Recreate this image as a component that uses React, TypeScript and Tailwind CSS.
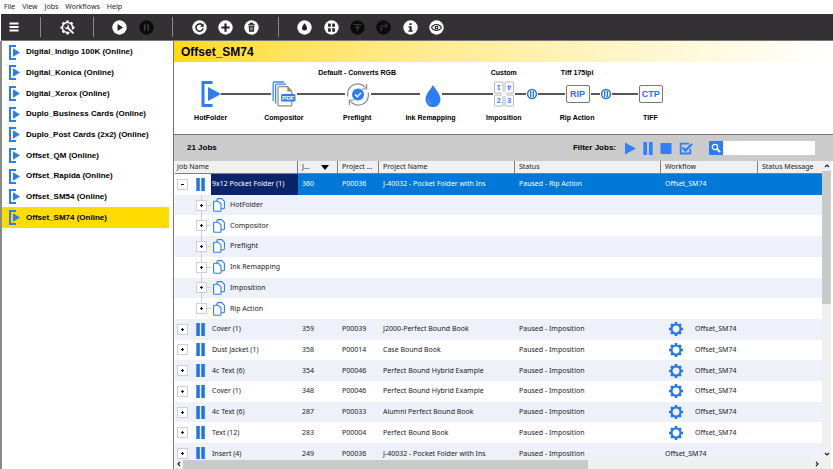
import type { ReactNode } from 'react';

const UI = "font-['Noto_Sans','Open_Sans',sans-serif]";
const BOLD = "font-['Liberation_Sans',Arial,sans-serif] font-bold";

const menus = ['File', 'View', 'Jobs', 'Workflows', 'Help'];

const workflows = [
  'Digital_Indigo 100K (Online)',
  'Digital_Konica (Online)',
  'Digital_Xerox (Online)',
  'Duplo_Business Cards (Online)',
  'Duplo_Post Cards (2x2) (Online)',
  'Offset_QM (Online)',
  'Offset_Rapida (Online)',
  'Offset_SM54 (Online)',
  'Offset_SM74 (Online)',
];

const stages = ['HotFolder', 'Compositor', 'Preflight', 'Ink Remapping', 'Imposition', 'Rip Action'];

const jobs = [
  { name: 'Cover (1)', id: '359', project: 'P00039', title: 'J2000-Perfect Bound Book', gear: true },
  { name: 'Dust Jacket (1)', id: '358', project: 'P00014', title: 'Case Bound Book', gear: true },
  { name: '4c Text (6)', id: '354', project: 'P00046', title: 'Perfect Bound Hybrid Example', gear: true },
  { name: 'Cover (1)', id: '348', project: 'P00046', title: 'Perfect Bound Hybrid Example', gear: true },
  { name: '4c Text (6)', id: '287', project: 'P00033', title: 'Alumni Perfect Bound Book', gear: true },
  { name: 'Text (12)', id: '283', project: 'P00004', title: 'Perfect Bound Book', gear: true },
  { name: 'Insert (4)', id: '249', project: 'P00036', title: 'J-40032 - Pocket Folder with Ins', gear: false },
];

const teeth = [0, 45, 90, 135, 180, 225, 270, 315];

function HotFolderIcon() {
  return (
    <svg viewBox="0 0 20 26" className="h-[26px] w-5" aria-hidden="true">
      <path d="M11.500 1.500H2v23h9.500" fill="none" stroke="#2b7df5" strokeWidth="3" />
      <path d="M7 6 20 13 7 20z" fill="#2b7df5" />
    </svg>
  );
}

function FolderIcon() {
  return (
    <svg viewBox="0 0 11 15" className="h-[15px] w-[11px]" aria-hidden="true">
      <path d="M7 1H1v13h6" fill="none" stroke="#2b7df5" strokeWidth="2" />
      <path d="M4 3.200 11 7.500 4 11.800z" fill="#2b7df5" />
    </svg>
  );
}

function PauseBars() {
  return (
    <svg viewBox="0 0 9 13" className="ml-2 h-[13px] w-[9px]" aria-hidden="true">
      <path d="M.3 0h3.500v13H.3zM5.300 0h3.500v13H5.300z" fill="#1f74e8" />
    </svg>
  );
}

function GearIcon() {
  return (
    <svg viewBox="0 0 14 14" className="size-3.5 shrink-0" aria-hidden="true">
      <circle cx="7" cy="7" r="4.500" fill="none" stroke="#2277ec" strokeWidth="2.100" />
      {teeth.map((a) => (
        <path key={a} d="M5.700 0h2.600v2.400H5.700z" fill="#2277ec" transform={`rotate(${a} 7 7)`} />
      ))}
    </svg>
  );
}

function CopyIcon() {
  return (
    <svg viewBox="0 0 12 14" className="h-3.5 w-3 shrink-0" fill="#fff" stroke="#2b7df5" strokeWidth="1.100" aria-hidden="true">
      <path d="M4 1.600a1 1 0 0 1 1-1h3.600l2.800 2.800v6.400a1 1 0 0 1-1 1H4z" />
      <path d="M.6 4.200a1 1 0 0 1 1-1h3.600L8 6v6.300a1 1 0 0 1-1 1H1.600a1 1 0 0 1-1-1z" />
    </svg>
  );
}

function Expander({ label, open = false }: { label: string; open?: boolean }) {
  return (
    <button
      type="button"
      aria-label={label}
      aria-expanded={open}
      className="relative flex size-[11px] shrink-0 items-center justify-center border border-[#cfcfd3] bg-white"
    >
      <svg viewBox="0 0 3 3" className="size-[3px]" aria-hidden="true">
        <path d={open ? 'M0 1h3v1H0z' : 'M1 0h1v1h1v1H2v1H1V2H0V1h1z'} fill="#111" />
      </svg>
    </button>
  );
}

function Disc({ dark = false, children }: { dark?: boolean; children: ReactNode }) {
  return (
    <svg viewBox="0 0 16 16" className="size-[15px]" aria-hidden="true">
      <circle cx="8" cy="8" r="7.700" fill={dark ? '#0b0b0b' : '#fff'} />
      {children}
    </svg>
  );
}

const divider = null;
const tools: ({ label: string; icon: ReactNode } | null)[] = [
  {
    label: 'Menu',
    icon: (
      <svg viewBox="0 0 10 10" className="size-2.5" aria-hidden="true">
        <path d="M.5 1.500h9M.5 5h9M.5 8.500h9" stroke="#fff" strokeWidth="2" />
      </svg>
    ),
  },
  divider,
  {
    label: 'Workflow settings',
    icon: (
      <svg viewBox="0 0 16 16" className="size-[15px]" aria-hidden="true">
        <circle cx="8" cy="8" r="5.400" fill="none" stroke="#fff" strokeWidth="1.500" />
        {teeth.map((a) => (
          <path key={a} d="M6.800.6h2.400l.4 2.200H6.400z" fill="#fff" transform={`rotate(${a} 8 8)`} />
        ))}
        <path d="m8.200 8.200 5.600 5.600" stroke="#333133" strokeWidth="4" />
        <path d="m8 8 5.800 5.800" stroke="#fff" strokeWidth="2" strokeLinecap="round" />
        <path d="M7 4.800 8.600 6.400 8 8l-1.600.6L4.800 7a2.600 2.600 0 0 0 4.400 2 2.600 2.600 0 0 0-2.200-4.200z" fill="#fff" />
      </svg>
    ),
  },
  divider,
  { label: 'Start', icon: <Disc><path d="M5.900 4.200 11.800 8l-5.900 3.800z" fill="#222" /></Disc> },
  { label: 'Pause', icon: <Disc dark><path d="M5.200 4.600h1.900v6.800H5.200zM8.900 4.600h1.900v6.800H8.900z" fill="#3c3c3c" /></Disc> },
  divider,
  {
    label: 'Refresh',
    icon: (
      <Disc>
        <path d="M11 5.400A3.900 3.900 0 1 0 11.900 9" fill="none" stroke="#222" strokeWidth="1.600" />
        <path d="M12.400 3.400v3.900H8.500z" fill="#222" />
      </Disc>
    ),
  },
  { label: 'Add', icon: <Disc><path d="M8 3.600v8.800M3.600 8h8.800" stroke="#222" strokeWidth="2.300" /></Disc> },
  {
    label: 'Delete',
    icon: (
      <Disc>
        <path d="M4.400 5h7.200M6.600 4.800V3.600h2.800v1.200" fill="none" stroke="#222" strokeWidth="1.100" />
        <path d="M5 6.200h6l-.4 6.200H5.400z" fill="#222" />
        <path d="M6.700 7.200v4M8 7.200v4M9.300 7.200v4" stroke="#ddd" strokeWidth=".6" />
      </Disc>
    ),
  },
  divider,
  { label: 'Ink', icon: <Disc><path d="M8 3.400c1.400 2 2.700 3.400 2.700 5.200a2.700 2.700 0 0 1-5.400 0C5.300 6.800 6.600 5.400 8 3.400z" fill="#222" /></Disc> },
  {
    label: 'Imposition',
    icon: (
      <Disc>
        <path d="M4.400 3.600h2.300l.5.600v3H4.400zM8.800 3.600h2.300l.5.600v3H8.800zM4.400 8.800h2.300l.5.600v3H4.400zM8.800 8.800h2.300l.5.600v3H8.800z" fill="#222" />
      </Disc>
    ),
  },
  {
    label: 'Send to top',
    icon: <Disc dark><path d="M3.600 4.800h8.800M8 12V6.800M5.600 8.800 8 6.400l2.400 2.400" fill="none" stroke="#363636" strokeWidth="1.300" /></Disc>,
  },
  {
    label: 'Reroute',
    icon: <Disc dark><path d="M5.400 12.200V6.200h6M9.600 3.800 12 6.200 9.600 8.600M5.400 9.400h2" fill="none" stroke="#363636" strokeWidth="1.300" /></Disc>,
  },
  {
    label: 'Information',
    icon: (
      <Disc>
        <path d="M6.900 3.400h2.300v2H6.900zM5.900 6.600h3.300v4.600h1.200v1.400H5.800v-1.400H7V8H5.900z" fill="#222" />
      </Disc>
    ),
  },
  {
    label: 'Preview',
    icon: (
      <Disc>
        <path d="M2.600 8C4.200 5.600 6 4.800 8 4.800s3.800.8 5.400 3.200c-1.600 2.400-3.400 3.200-5.400 3.200S4.200 10.400 2.600 8z" fill="none" stroke="#222" strokeWidth="1.100" />
        <circle cx="8" cy="8" r="2" fill="#222" />
        <circle cx="8" cy="8" r=".7" fill="#fff" />
      </Disc>
    ),
  },
];

const pdfIcon = (
  <svg viewBox="0 0 24 26" className="h-[26px] w-6" aria-hidden="true">
    <path d="M1.200 20V2.200A1.200 1.200 0 0 1 2.400 1H12M3.600 22.500V4.400a1.200 1.200 0 0 1 1.200-1.200H14" fill="none" stroke="#3b88f5" strokeWidth="1.300" />
    <path d="M6 23.800V6.600c0-.6.400-1 1-1h8.600l4.200 4.600v13.600c0 .6-.4 1-1 1H7c-.6 0-1-.4-1-1z" fill="#fff" stroke="#8c8c8c" strokeWidth="1.200" />
    <path d="M15.400 5.600v4.800h4.600z" fill="#8c8c8c" />
    <rect x="9" y="13" width="14.500" height="7.500" rx="1.500" fill="#2b7df5" />
    <text x="16.200" y="19" textAnchor="middle" fontSize="6.200" fontWeight="bold" fill="#fff" fontFamily="Liberation Sans, Arial, sans-serif">PDF</text>
  </svg>
);

const preflightIcon = (
  <svg viewBox="0 0 24 26" className="h-[26px] w-6" aria-hidden="true">
    <path d="M1.800 15.500A10.200 10.200 0 0 1 19.600 6.600M22.200 11.500A10.200 10.200 0 0 1 4.400 20.400" fill="none" stroke="#8c8c8c" strokeWidth="1.200" />
    <path d="M20.600 3v5h-5M3.400 24v-5h5" fill="none" stroke="#8c8c8c" strokeWidth="1.200" />
    <circle cx="12" cy="13.500" r="6" fill="#2b7df5" />
    <path d="m9 13.500 2.300 2.200 3.800-4" fill="none" stroke="#fff" strokeWidth="1.500" />
  </svg>
);

const inkIcon = (
  <svg viewBox="0 0 20 26" className="h-[26px] w-5" aria-hidden="true">
    <path d="M12 4c2.600 5 7.500 9 7.500 14.600a7.500 7.500 0 0 1-15 0C4.500 13 9.400 9 12 4z" fill="#2b7df5" />
    <path d="M7 18a5 5 0 0 0 3.500 5" fill="none" stroke="#7fb0fa" strokeWidth=".8" />
  </svg>
);

const impositionIcon = (
  <svg viewBox="0 0 20 26" className="h-[26px] w-5" aria-hidden="true">
    {[
      { n: '1', x: 0.5, y: 1, r: 180 },
      { n: '4', x: 11, y: 1, r: 180 },
      { n: '2', x: 0.5, y: 14, r: 0 },
      { n: '3', x: 11, y: 14, r: 0 },
    ].map((p) => (
      <g key={p.n}>
        <rect x={p.x} y={p.y} width="8.500" height="11" rx="1" fill="#fff" stroke="#b5b5ba" strokeWidth="1" />
        <text x={p.x + 4.2} y={p.y + 8.2} textAnchor="middle" fontSize="7" fontWeight="bold" fill="#2b7df5" fontFamily="Liberation Sans, Arial, sans-serif" transform={`rotate(${p.r} ${p.x + 4.2} ${p.y + 5.6})`}>{p.n}</text>
      </g>
    ))}
    <path d="m7.500 10.500 5 5M12.500 10.500l-5 5" stroke="#fff" strokeWidth="1.500" />
  </svg>
);

function Plate({ children }: { children: string }) {
  return (
    <span className="flex h-[18px] w-6 items-center justify-center rounded-[2px] border border-[#77777c] bg-white text-[9px] leading-3 text-[#1f74e8]">
      {children}
    </span>
  );
}

const steps: { label: string; caption?: string; icon: ReactNode; pause?: boolean }[] = [
  { label: 'HotFolder', icon: <HotFolderIcon /> },
  { label: 'Compositor', icon: pdfIcon },
  { label: 'Preflight', caption: 'Default - Converts RGB', icon: preflightIcon },
  { label: 'Ink Remapping', icon: inkIcon },
  { label: 'Imposition', caption: 'Custom', icon: impositionIcon, pause: true },
  { label: 'Rip Action', caption: 'Tiff 175lpi', icon: <Plate>RIP</Plate>, pause: true },
  { label: 'TIFF', icon: <Plate>CTP</Plate> },
];

function Pipeline() {
  return (
    <ol className={`grid w-[513px] grid-cols-7 pt-1.5 text-[7px] leading-[10px] text-black ${BOLD}`}>
      {steps.map((s, i) => (
        <li key={s.label} className="flex flex-col items-center">
          <span className="h-[10px] whitespace-nowrap">{s.caption}</span>
          <div className="mt-[3px] flex h-[26px] w-full items-center">
            <span className={`h-0.5 flex-1 ${i > 0 ? 'mr-px bg-[#5a5457]' : ''}`} />
            {s.icon}
            <span className="flex flex-1 items-center">
              <span className={`h-0.5 flex-1 ${i < steps.length - 1 ? 'bg-[#5a5457]' : ''} ${i > 0 ? 'ml-px' : ''}`} />
              {s.pause && (
                <>
                  <svg viewBox="0 0 12 12" className="size-3" aria-label="Paused">
                    <circle cx="6" cy="6" r="4.400" fill="#fff" stroke="#1f74e8" strokeWidth="1.500" />
                    <path d="M4.700 3v6M7.300 3v6" stroke="#1f74e8" strokeWidth="1.300" />
                  </svg>
                  <span className="h-0.5 w-0.5 bg-[#5a5457]" />
                </>
              )}
            </span>
          </div>
          <span className="mt-1.5 whitespace-nowrap">{s.label}</span>
        </li>
      ))}
    </ol>
  );
}

const filters = [
  { label: 'Show running', w: 'w-3', vb: '0 0 12 13', icon: <path d="M1 .5 12 6.500 1 12.500z" fill="#2f80fa" /> },
  { label: 'Show paused', w: 'w-2.5', vb: '0 0 10 13', icon: <path d="M.3 0h3.700v13H.3zM6 0h3.700v13H6z" fill="#2f80fa" /> },
  { label: 'Show stopped', w: 'w-3', vb: '0 0 12 13', icon: <path d="M.5 1h11v11H.5z" fill="#2f80fa" /> },
  {
    label: 'Show completed',
    w: 'w-3.5',
    vb: '0 0 14 13',
    icon: (
      <g fill="none" stroke="#2f80fa">
        <path d="M10 1.700H1.700v9.800h9.600V7" strokeWidth="1.800" />
        <path d="m3.500 5.500 3 3L13 2" strokeWidth="2.400" />
      </g>
    ),
  },
];

function FilterBar() {
  return (
    <div className={`flex h-[26px] shrink-0 items-center bg-[#cbcbcb] pr-[18px] pl-[13px] text-[8px] text-black ${BOLD}`}>
      <h2>21 Jobs</h2>
      <span className="ml-auto">Filter Jobs:</span>
      <div className="ml-2 flex items-center gap-[7px]">
        {filters.map((f) => (
          <button key={f.label} type="button" aria-label={f.label}>
            <svg viewBox={f.vb} className={`h-[13px] ${f.w}`} aria-hidden="true">{f.icon}</svg>
          </button>
        ))}
      </div>
      <form className="ml-4 flex h-3.5" onSubmit={(e) => e.preventDefault()}>
        <button type="submit" aria-label="Search" className="flex size-3.5 items-center justify-center bg-[#2b7df5]">
          <svg viewBox="0 0 10 10" className="size-2.5" aria-hidden="true">
            <circle cx="4" cy="4" r="2.700" fill="none" stroke="#fff" strokeWidth="1.300" />
            <path d="m6 6 3.200 3.200" stroke="#fff" strokeWidth="1.800" />
          </svg>
        </button>
        <input aria-label="Search jobs" className="w-[92px] bg-white px-1 outline-none" />
      </form>
    </div>
  );
}

const headCell = 'overflow-hidden border-r border-b border-[#808080] p-0 pl-1 text-left font-normal';
const cell = 'overflow-hidden p-0 pl-1';

function JobTable() {
  return (
    <table className="h-[303px] w-full table-fixed border-separate border-spacing-0 text-[7px] leading-[10px] whitespace-nowrap text-[#1a1a1a]">
      <colgroup>
        <col className="w-[123px]" />
        <col className="w-10" />
        <col className="w-[41px]" />
        <col className="w-[136px]" />
        <col className="w-[146px]" />
        <col className="w-[97px]" />
        <col />
      </colgroup>
      <thead className="bg-[#f0f0f0]">
        <tr className="h-[13px]">
          <th className="overflow-hidden border-r border-b border-[#808080] p-0 pl-0.5 text-left font-normal">Job Name</th>
          <th className={headCell} aria-sort="descending">
            <span className="flex items-center justify-between pr-2">
              J...
              <svg viewBox="0 0 8 5" className="h-[5px] w-2" aria-hidden="true"><path d="M0 0h8L4 5z" fill="#000" /></svg>
            </span>
          </th>
          <th className={headCell}>Project ...</th>
          <th className={headCell}>Project Name</th>
          <th className={headCell}>Status</th>
          <th className={headCell}>Workflow</th>
          <th className="overflow-hidden border-b border-[#808080] p-0 pl-1 text-left font-normal">Status Message</th>
        </tr>
      </thead>
      <tbody>
        <tr className="bg-[#0078d7] text-white" aria-selected="true">
          <td className="h-[20px] bg-linear-to-r from-white from-[36px] to-[#0a246a] to-[36px] p-0 pl-0.5">
            <div className="flex items-center">
              <Expander label="Collapse 9x12 Pocket Folder" open />
              <PauseBars />
              <span className="ml-[7px]">9x12 Pocket Folder (1)</span>
            </div>
          </td>
          <td className={cell}>360</td>
          <td className={cell}>P00036</td>
          <td className={cell}>J-40032 - Pocket Folder with Ins</td>
          <td className={cell}>Paused - Rip Action</td>
          <td className={cell}>Offset_SM74</td>
          <td />
        </tr>
        {stages.map((s, i) => (
          <tr key={s} className={i % 2 === 0 ? 'bg-[#eef0fa]' : 'bg-white'}>
            <td colSpan={7} className="relative h-[20px] p-0 pl-[21px]">
              <span className={`absolute left-[26px] w-px bg-[#cfcfd3] ${i === stages.length - 1 ? 'top-0 h-1/2' : 'inset-y-0'}`} />
              <div className="flex items-center">
                <Expander label={`Expand ${s}`} />
                <span className="h-px w-1 bg-[#cfcfd3]" />
                <span className="ml-0.5 flex"><CopyIcon /></span>
                <span className="ml-[5px]">{s}</span>
              </div>
            </td>
          </tr>
        ))}
        {jobs.map((j, i) => (
          <tr key={j.id} className={i % 2 === 0 ? 'bg-[#eef0fa]' : 'bg-white'}>
            <td className="h-[20px] p-0 pl-0.5">
              <div className="flex items-center">
                <Expander label={`Expand ${j.name} ${j.id}`} />
                <PauseBars />
                <span className="ml-[7px]">{j.name}</span>
              </div>
            </td>
            <td className={cell}>{j.id}</td>
            <td className={cell}>{j.project}</td>
            <td className={cell}>{j.title}</td>
            <td className={cell}>Paused - Imposition</td>
            <td className={cell}>
              {j.gear ? (
                <div className="flex items-center gap-3 pl-1"><GearIcon />Offset_SM74</div>
              ) : (
                'Offset_SM74'
              )}
            </td>
            <td />
          </tr>
        ))}
      </tbody>
    </table>
  );
}

function Chevron({ d }: { d: string }) {
  return (
    <svg viewBox="0 0 6 6" className="size-1.5" aria-hidden="true">
      <path d={d} fill="none" stroke="#222" strokeWidth="1.200" />
    </svg>
  );
}

export default function App() {
  return (
    <div className={`flex h-screen flex-col overflow-hidden bg-white ${UI}`}>
      <nav className="flex h-3.5 shrink-0 items-center gap-[7px] pl-1 text-[7px] leading-[10px] text-[#222]">
        {menus.map((m) => (
          <button key={m} type="button">{m}</button>
        ))}
      </nav>

      <div className="ml-px h-[27px] shrink-0 border-b border-[#777] bg-[#333133]">
        <div className="grid h-full w-[449px] grid-cols-[repeat(17,minmax(0,1fr))] items-center justify-items-center">
          {tools.map((t, i) =>
            t ? (
              <button key={t.label} type="button" aria-label={t.label} className="flex">{t.icon}</button>
            ) : (
              <span key={i} className="h-5 w-px bg-[#8a8a8a]" />
            ),
          )}
        </div>
      </div>

      <div className="flex min-h-0 flex-1">
        <aside className="w-[169px] shrink-0 border-l-2 border-[#8a8a8a] pt-px">
          <ul className="grid h-[186px] auto-rows-fr">
            {workflows.map((w, i) => (
              <li key={w} className="flex">
                <button
                  type="button"
                  className={`flex w-full items-center gap-1.5 pl-[7px] text-left text-[8px] leading-[10px] whitespace-nowrap text-black ${BOLD} ${i === workflows.length - 1 ? 'bg-[#ffdc00]' : ''}`}
                >
                  <FolderIcon />
                  {w}
                </button>
              </li>
            ))}
          </ul>
        </aside>

        <main className="ml-1 flex min-w-0 flex-1 flex-col border-l border-[#777]">
          <header className="flex h-[21px] shrink-0 items-center bg-linear-to-r from-[#ffdc00] to-white pl-[7px]">
            <h1 className={`text-[12px] leading-5 text-black ${BOLD}`}>Offset_SM74</h1>
          </header>
          <section className="h-[72px] shrink-0" aria-label="Workflow pipeline">
            <Pipeline />
          </section>

          <section className="flex min-h-0 flex-1 flex-col border-t border-[#777]" aria-label="Jobs">
            <FilterBar />
            <div className="flex min-h-0 flex-1">
              <div className="flex min-w-0 flex-1 flex-col pl-px">
                <div className="min-h-0 flex-1 overflow-hidden">
                  <JobTable />
                </div>
                <div className="flex h-2.5 shrink-0 items-center bg-[#f0f0f0]">
                  <button type="button" aria-label="Scroll left" className="flex w-2 justify-center"><Chevron d="M4 1 2 3l2 2" /></button>
                  <div className="h-[9px] w-[405px] bg-[#c9cbca]" />
                  <button type="button" aria-label="Scroll right" className="ml-auto flex w-2.5 justify-center"><Chevron d="m2 1 2 2-2 2" /></button>
                </div>
              </div>
              <div className="mr-0.5 flex w-[9px] shrink-0 flex-col items-center bg-[#f0f0f0]">
                <button type="button" aria-label="Scroll up" className="flex h-2.5 items-center"><Chevron d="M1 4l2-2 2 2" /></button>
                <div className="h-[133px] w-full bg-[#c9cbca]" />
                <button type="button" aria-label="Scroll down" className="mt-auto mb-2.5 flex h-2.5 items-center"><Chevron d="m1 2 2 2 2-2" /></button>
              </div>
            </div>
          </section>
        </main>
      </div>
    </div>
  );
}
